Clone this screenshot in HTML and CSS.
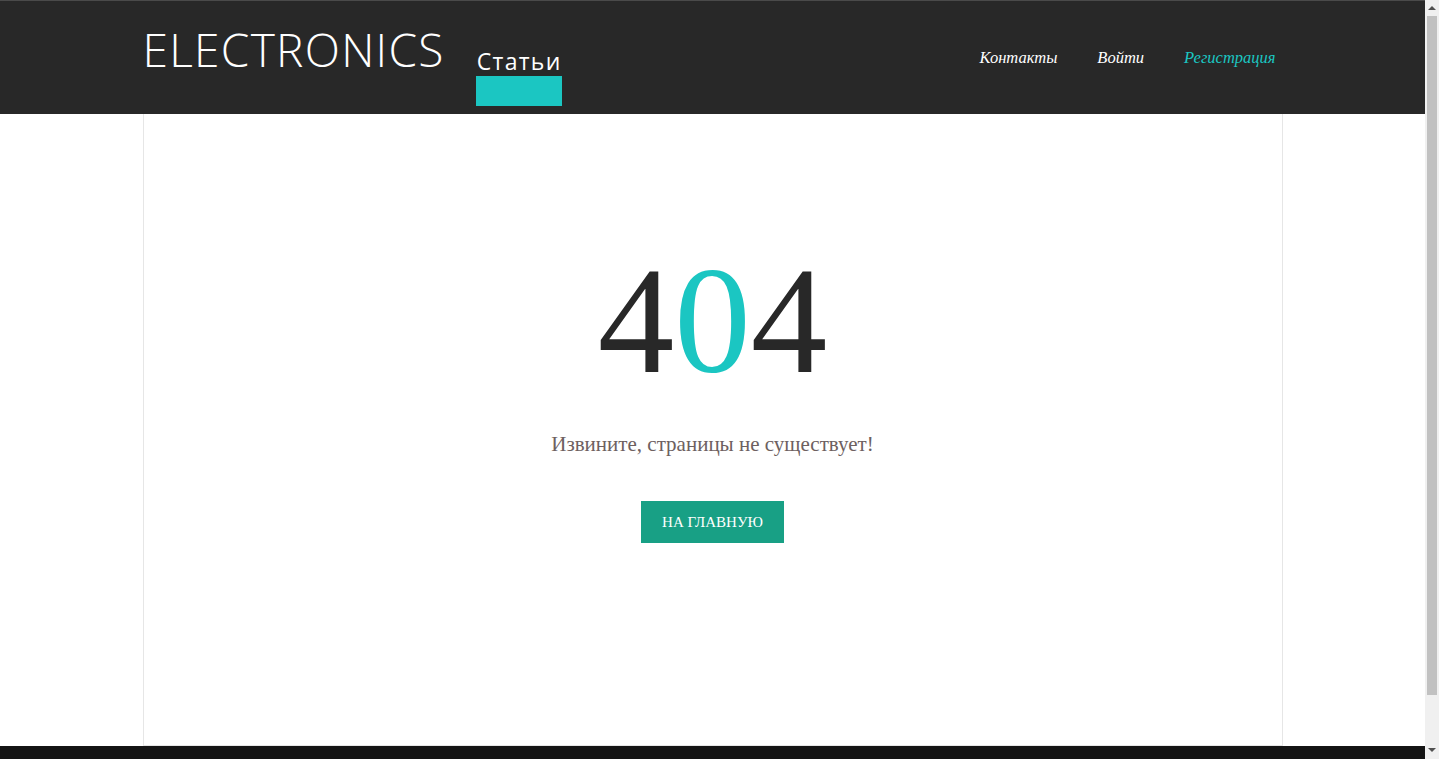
FILE: index.html
```html
<!DOCTYPE html>
<html lang="ru">
<head>
<meta charset="utf-8">
<title>404 — Electronics</title>
<link rel="stylesheet" href="styles.css">
</head>
<body>
<div class="page">
  <header class="header">
    <div class="header-inner">
      <div class="brand">
        <a class="logo" href="#">ELECTRONICS</a>
        <div class="articles">
          <a class="articles-link" href="#">Статьи</a>
          <span class="articles-bar"></span>
        </div>
      </div>
      <nav class="nav">
        <a class="nav-link" href="#">Контакты</a>
        <a class="nav-link" href="#">Войти</a>
        <a class="nav-link nav-link-accent" href="#">Регистрация</a>
      </nav>
    </div>
  </header>
  <main class="content">
    <div class="error">
      <div class="error-code">4<span class="error-zero">0</span>4</div>
      <p class="error-text">Извините, страницы не существует!</p>
      <a class="error-btn" href="#">На главную</a>
    </div>
  </main>
  <footer class="footer"></footer>
</div>
<div class="scrollbar">
  <div class="scroll-arrow scroll-up"></div>
  <div class="scroll-track"><div class="scroll-thumb"></div></div>
  <div class="scroll-arrow scroll-down"></div>
</div>
</body>
</html>
```
FILE: styles.css
```css
* { box-sizing: border-box; }
html, body { margin: 0; padding: 0; height: 100%; overflow: hidden; }
body { background: #fff; font-family: "Liberation Serif", "Times New Roman", serif; }
a { text-decoration: none; }

.page {
  width: calc(100% - 14px);
  height: 100vh;
  display: flex;
  flex-direction: column;
}

.header {
  background: #282828;
  border-top: 1px solid #4a4a4a;
  height: 114px;
  flex: none;
}
.header-inner {
  width: 1140px;
  margin: 0 auto;
  display: flex;
  justify-content: space-between;
  padding: 0 7px 0 0;
}
.brand { display: flex; align-items: flex-start; }
.logo {
  font-family: "Open Sans", sans-serif;
  font-weight: 300;
  font-size: 46px;
  line-height: 46px;
  color: #fff;
  margin-top: 25px;
  letter-spacing: 1.3px;
}
.articles {
  margin-left: 31px;
  margin-top: 45px;
  display: flex;
  flex-direction: column;
  width: 86px;
}
.articles-link {
  font-family: "Open Sans", sans-serif;
  font-size: 23px;
  line-height: 30px;
  letter-spacing: 1.3px;
  color: #fff;
  padding-left: 1px;
  white-space: nowrap;
}
.articles-bar {
  display: block;
  height: 30px;
  background: #1bc6c2;
}
.nav { display: flex; gap: 40px; margin-top: 46px; }
.nav-link {
  font-family: "Liberation Serif", serif;
  font-style: italic;
  font-size: 16.5px;
  line-height: 22px;
  color: #fff;
}
.nav-link-accent { color: #1bc6c2; }

.content {
  flex: 1;
  width: 1140px;
  margin: 0 auto;
  border: 1px solid #e6e6e6;
  border-top: none;
  display: flex;
  justify-content: center;
}
.error {
  display: flex;
  flex-direction: column;
  align-items: center;
  padding-top: 130px;
}
.error-code {
  font-size: 153px;
  line-height: 153px;
  color: #282828;
}
.error-zero { color: #1bc6c2; }
.error-text {
  margin: 35px 0 0;
  font-size: 21px;
  line-height: 24px;
  color: #6d6060;
}
.error-btn {
  margin-top: 45px;
  background: #18a085;
  color: #fff;
  text-transform: uppercase;
  font-size: 15px;
  line-height: 42px;
  padding: 0 21px;
}

.footer {
  background: #141414;
  height: 13px;
  flex: none;
}

.scrollbar {
  position: fixed;
  top: 0;
  right: 0;
  width: 14px;
  height: 100vh;
  background: #f0f0f0;
  display: flex;
  flex-direction: column;
}
.scroll-arrow { height: 16px; position: relative; flex: none; }
.scroll-up::after, .scroll-down::after {
  content: "";
  position: absolute;
  left: 3px;
  border-left: 4px solid transparent;
  border-right: 4px solid transparent;
}
.scroll-up::after { top: 6px; border-bottom: 4px solid #505050; }
.scroll-down::after { top: 5px; border-top: 4px solid #505050; }
.scroll-track { flex: 1; padding: 0 2px; }
.scroll-thumb { height: 679px; background: #c1c1c1; }
```
